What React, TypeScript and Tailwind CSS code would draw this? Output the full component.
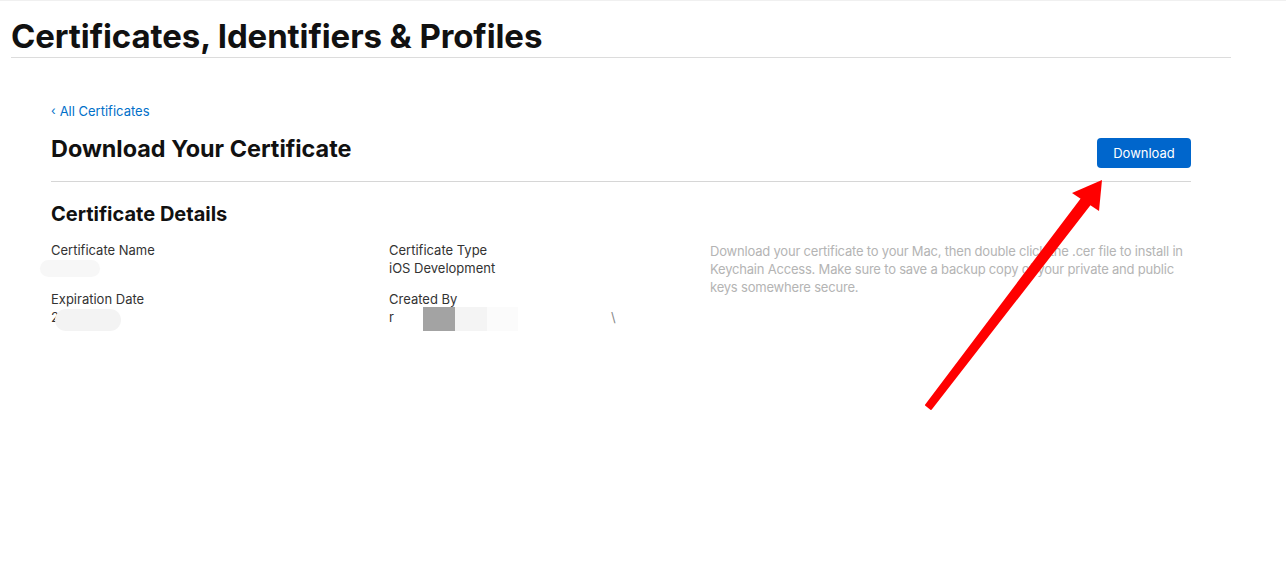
import React from 'react';

const font = { fontFamily: 'Inter, "Noto Sans", sans-serif' };

const Field: React.FC<{ label: string; children?: React.ReactNode }> = ({ label, children }) => (
  <div className="flex flex-col">
    <span className="text-[13px] leading-[18px] text-[#333]">{label}</span>
    <div className="h-[18px] text-[13px] leading-[18px] text-[#333] relative">{children}</div>
  </div>
);

const App: React.FC = () => {
  return (
    <div className="w-[1286px] h-[583px] bg-white border-t border-[#f0f0f0] relative overflow-hidden" style={font}>
      <header className="ml-[11px] w-[1220px] border-b border-[#dcdcdc] pt-[16px] pb-[2px]">
        <h1 className="text-[33px] leading-[38px] font-bold text-[#111] tracking-[-0.1px]">
          Certificates, Identifiers &amp; Profiles
        </h1>
      </header>

      <main className="ml-[51px] w-[1140px] pt-[44px]">
        <a className="text-[13px] leading-[18px] text-[#0070c9] flex items-center gap-[4px]">
          <span className="text-[12px]">‹</span>All Certificates
        </a>

        <div className="flex items-start justify-between mt-[14px] pb-[17px] border-b border-[#d6d6d6]">
          <h2 className="text-[23.4px] leading-[30px] font-bold text-[#111]">Download Your Certificate</h2>
          <button className="w-[94px] h-[30px] rounded-[4px] bg-[#0066cc] text-white text-[13px] leading-[30px] mt-[4px] mb-[-4px]">
            Download
          </button>
        </div>

        <h3 className="text-[20px] leading-[26px] font-bold text-[#111] mt-[19px]">Certificate Details</h3>

        <div className="flex mt-[14px]">
          <div className="w-[338px] flex flex-col gap-[13px]">
            <Field label="Certificate Name">
              <div className="absolute left-[-11px] top-[1px] w-[60px] h-[17px] rounded-full bg-[#f7f7f7]" />
            </Field>
            <Field label="Expiration Date">
              <span>2</span>
              <div className="absolute left-[4px] top-[1px] w-[66px] h-[22px] rounded-full bg-[#f3f3f3]" />
            </Field>
          </div>
          <div className="w-[321px] flex flex-col gap-[13px]">
            <Field label="Certificate Type">iOS Development</Field>
            <Field label="Created By">
              <span>r</span>
              <div className="absolute left-[34px] top-[-1px] flex h-[24px]">
                <div className="w-[32px] bg-[#a3a3a3]" />
                <div className="w-[32px] bg-[#f4f4f4]" />
                <div className="w-[31px] bg-[#fbfbfb]" />
              </div>
              <span className="absolute left-[222px] top-0 text-[#888]">\</span>
            </Field>
          </div>
          <p className="flex-1 text-[13px] leading-[18px] text-[#b4b4b4] pt-[1px] tracking-[-0.2px]">
            Download your certificate to your Mac, then double click the .cer file to install in Keychain Access. Make
            sure to save a backup copy of your private and public keys somewhere secure.
          </p>
        </div>
      </main>

      {/* annotation arrow */}
      <svg className="absolute left-0 top-0 pointer-events-none" width="1286" height="583">
        <path d="M926 404 L1083 196 L1091 202 L931 408 Z" fill="#ff0000" stroke="#ff0000" strokeWidth="2" strokeLinejoin="round" />
        <polygon points="1102,179 1072,192 1099,210" fill="#ff0000" />
      </svg>
    </div>
  );
};

export default App;
